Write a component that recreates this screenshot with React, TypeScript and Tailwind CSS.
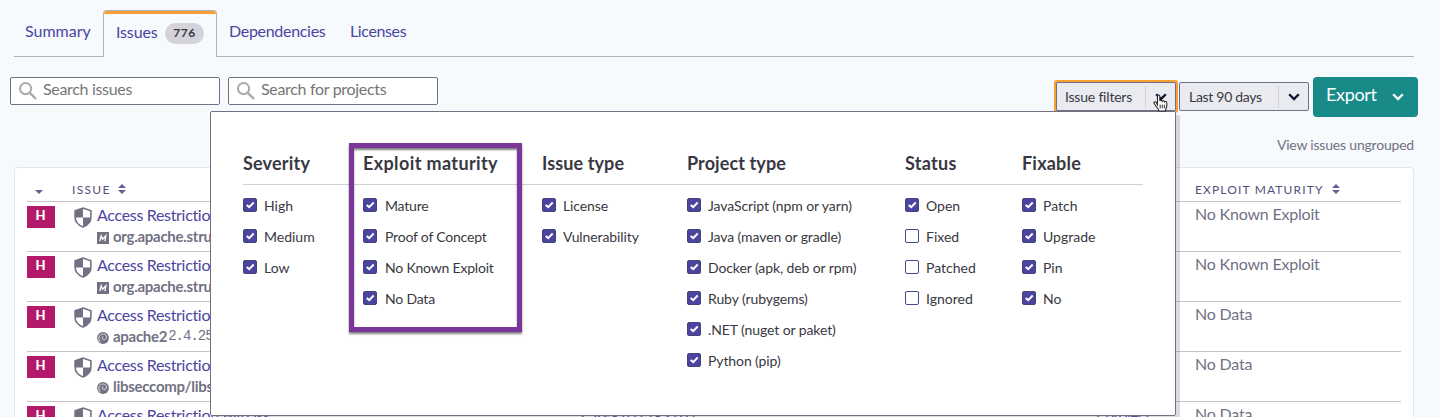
import React from "react";

type Option = { label: string; checked: boolean };
type Group = { title: string; titleClass: string; gap: string; options: Option[] };

const on = (label: string): Option => ({ label, checked: true });
const off = (label: string): Option => ({ label, checked: false });

const groups: Group[] = [
  { title: "Severity", titleClass: "tracking-[0.2px]", gap: "gap-[7px]", options: [on("High"), on("Medium"), on("Low")] },
  {
    title: "Exploit maturity",
    titleClass: "tracking-[0.38px]",
    gap: "gap-[8px] tracking-[-0.2px]",
    options: [on("Mature"), on("Proof of Concept"), on("No Known Exploit"), on("No Data")],
  },
  {
    title: "Issue type",
    titleClass: "tracking-[0.1px]",
    gap: "gap-[7px] tracking-[-0.1px]",
    options: [on("License"), on("Vulnerability")],
  },
  {
    title: "Project type",
    titleClass: "tracking-[0.1px]",
    gap: "gap-[7px] tracking-[-0.1px]",
    options: [
      on("JavaScript (npm or yarn)"),
      on("Java (maven or gradle)"),
      on("Docker (apk, deb or rpm)"),
      on("Ruby (rubygems)"),
      on(".NET (nuget or paket)"),
      on("Python (pip)"),
    ],
  },
  {
    title: "Status",
    titleClass: "tracking-[0.3px]",
    gap: "gap-[7px]",
    options: [on("Open"), off("Fixed"), off("Patched"), off("Ignored")],
  },
  {
    title: "Fixable",
    titleClass: "tracking-[0.2px]",
    gap: "gap-[7px]",
    options: [on("Patch"), on("Upgrade"), on("Pin"), on("No")],
  },
];

type Row = { kind?: "maven" | "debian"; pkg?: string; version?: string; cve?: string; projects?: string; maturity: string };
const rows: Row[] = [
  { kind: "maven", pkg: "org.apache.struts", maturity: "No Known Exploit" },
  { kind: "maven", pkg: "org.apache.struts", maturity: "No Known Exploit" },
  { kind: "debian", pkg: "apache2", version: "2.4.25", maturity: "No Data" },
  { kind: "debian", pkg: "libseccomp/libs", maturity: "No Data" },
  { cve: "CVE-2017-3167", projects: "1 project", maturity: "No Data" },
];

function Checkbox({ checked }: { checked: boolean }) {
  if (!checked) return <span className="block h-[14px] w-[14px] shrink-0 rounded-[2px] border border-[#434a87] bg-white" />;
  return (
    <svg className="h-[14px] w-[14px] shrink-0" viewBox="0 0 14 14">
      <rect x="0.5" y="0.5" width="13" height="13" rx="1.5" fill="#4b45a1" stroke="#434478" />
      <path d="M3.700 6.900 6.200 9.100 10.700 4.500" fill="none" stroke="#fff" strokeWidth="2" />
    </svg>
  );
}

function SearchBox({ text }: { text: string }) {
  return (
    <div className="flex h-[28px] w-[210px] items-center rounded-[2px] border border-[#727184] bg-white pl-[8px]">
      <svg className="h-[18px] w-[18px] shrink-0" viewBox="0 0 18 18" fill="none" stroke="#aaaaaa" strokeWidth="2">
        <circle cx="6.6" cy="6.6" r="5.6" />
        <path d="M10.8 10.8 17 17" strokeWidth="2.4" />
      </svg>
      <span className="-mt-[4px] ml-[6px] text-[16px] leading-[24px] tracking-[-0.32px] text-[#757575]">{text}</span>
    </div>
  );
}

function Chevron({ className }: { className: string }) {
  return (
    <svg className={className} viewBox="0 0 12 8" fill="none" stroke="currentColor" strokeWidth="2.3">
      <path d="M1.2 1.3 6 6.1 10.8 1.3" />
    </svg>
  );
}

function SortIcon() {
  return (
    <svg className="h-[10px] w-[8px]" viewBox="0 0 8 10" fill="#625f94">
      <path d="M0 4 4 0l4 4zM0 6h8L4 10z" />
    </svg>
  );
}

function Shield() {
  return (
    <svg className="h-[21px] w-[18px] shrink-0" viewBox="0 0 18 21">
      <path
        d="M9 1 16.900 3.800V10c0 4.700-3.200 8.200-7.900 9.900C4.300 18.200 1.100 14.700 1.100 10V3.800Z"
        fill="#fff"
        stroke="#727184"
        strokeWidth="1.6"
      />
      <path d="M9 1v9.500H1V3.800zM9 10.500h8c-.3 4.600-3.500 7.800-8 9.400z" fill="#727184" />
    </svg>
  );
}

function PackageIcon({ kind }: { kind: Row["kind"] }) {
  if (kind === "maven")
    return (
      <svg className="h-[12px] w-[12px] shrink-0" viewBox="0 0 12 12">
        <rect width="12" height="12" fill="#727184" />
        <path d="M2.800 9.200 4.200 3.800 5.600 7.200 8.800 3.800 7.900 9.200" fill="none" stroke="#fff" strokeWidth="1.300" />
      </svg>
    );
  return (
    <svg className="h-[12px] w-[12px] shrink-0" viewBox="0 0 12 12">
      <circle cx="6" cy="6" r="5.900" fill="#727184" />
      <path
        d="M3.300 10.300C1.300 7.500 1.400 4.400 3.600 2.800 6 1.200 9.400 2.200 9.500 5 9.500 7.500 6.700 8.400 5.500 7.100 4.500 6 5.300 4.700 6.500 4.900"
        fill="none"
        stroke="#e6e6ea"
        strokeWidth="0.900"
      />
    </svg>
  );
}

function FilterPanel() {
  return (
    <div className="absolute left-[210px] top-[111px] h-[305px] w-[966px] rounded-[2px] border border-[#727184] bg-white px-[32px] pt-[38px] shadow-[4px_4px_0_rgba(114,113,132,0.25)]">
      <div className="grid grid-cols-[120px_179px_145px_218px_117px_121px]">
        {groups.map((g) => (
          <div key={g.title}>
            <h3
              className={
                "h-[35px] whitespace-nowrap border-b border-[#cfcfd8] text-[18px] font-bold leading-[27px] text-[#393842] " +
                g.titleClass
              }
            >
              {g.title}
            </h3>
            <ul className="pt-[4px]">
              {g.options.map((o) => (
                <li key={o.label} className={"flex h-[31px] items-center whitespace-nowrap text-[14px] text-[#393842] " + g.gap}>
                  <Checkbox checked={o.checked} />
                  <span className="mt-[2px]">{o.label}</span>
                </li>
              ))}
            </ul>
          </div>
        ))}
      </div>
      <div className="absolute left-[138px] top-[31px] h-[189px] w-[173px] border-[5px] border-[#7a3698] shadow-[0_2px_2px_rgba(0,0,0,0.5),inset_0_2px_2px_rgba(0,0,0,0.5)]" />
    </div>
  );
}

function HandCursor() {
  return (
    <svg className="absolute left-[1153px] top-[94px] h-[18px] w-[16px]" viewBox="0 0 15 17">
      <path
        d="M4.200 10V2.200c0-1.600 2.200-1.600 2.200 0V6.600c.2-1 2-.9 2.200.3.4-.9 2-.7 2.200.5.6-.7 2.200-.4 2.200 1V11c0 2-1.200 2.700-1.300 5H5.500C5.300 14 3.600 13 2.700 11.300 2 10 1 9 .8 8.300.8 7 2.500 7 3.200 8.200z"
        fill="#fff"
        stroke="#222"
        strokeWidth="1"
      />
      <path d="M6.700 10v3.600M8.700 10v3.600M10.700 10v3.600" stroke="#222" strokeWidth="0.900" />
    </svg>
  );
}

export default function App() {
  return (
    <div className="relative h-[417px] w-[1440px] overflow-hidden bg-[#f6fafd] font-['Lato',sans-serif]">
      <nav className="flex h-[57px] pl-[14px] pr-[26px] pt-[10px] text-[16px] text-[#4b45a1]">
        <div className="flex w-[89px] items-center border-b border-[#b3b2bd] pl-[11px]">
          <span className="-mt-[4px]">Summary</span>
        </div>
        <div className="relative flex w-[114px] items-center overflow-hidden rounded-t-[4px] border-x border-t border-[#b3b2bd] pl-[12px]">
          <span className="absolute inset-x-0 top-0 h-[3px] bg-[#f8a034]" />
          <span className="-mt-[4px] w-[49px] tracking-[-0.15px]">Issues</span>
          <span className="-mt-[2px] flex h-[21px] w-[39px] items-center justify-center rounded-full bg-[#d3d3d9] text-[12px] font-bold tracking-[0.6px] text-[#393842]">
            776
          </span>
        </div>
        <div className="flex flex-1 items-center border-b border-[#b3b2bd] pl-[12px]">
          <span className="-mt-[4px] w-[121px] tracking-[-0.3px]">Dependencies</span>
          <span className="-mt-[4px] tracking-[-0.38px]">Licenses</span>
        </div>
      </nav>

      <div className="flex h-[60px] items-start pl-[10px] pr-[22px] pt-[20px]">
        <div className="flex gap-[8px]">
          <SearchBox text="Search issues" />
          <SearchBox text="Search for projects" />
        </div>
        <div className="ml-auto flex items-start text-[14px] text-[#393842]">
          <div className="mr-[3px] mt-[5px] flex h-[29px] w-[120px] items-center rounded-[1px] border border-[#727184] bg-[#e9ebf1] pl-[8px] outline-2 outline-[#f8a034]">
            <span className="-mt-px w-[80px] tracking-[-0.2px]">Issue filters</span>
            <span className="h-[22px] w-px bg-[#cfcfd8]" />
            <Chevron className="ml-[9px] h-[8px] w-[12px] text-[#0b0b33]" />
          </div>
          <div className="mr-[4px] mt-[5px] flex h-[29px] w-[130px] items-center rounded-[2px] border border-[#727184] bg-[#e9ebf1] pl-[9px]">
            <span className="-mt-px w-[89px] tracking-[-0.3px]">Last 90 days</span>
            <span className="h-[22px] w-px bg-[#cfcfd8]" />
            <Chevron className="ml-[9px] h-[8px] w-[12px] text-[#0b0b33]" />
          </div>
          <div className="flex h-[40px] w-[105px] items-center rounded-[4px] bg-[#188b89] pl-[13px] text-[18px] text-white">
            <span className="-mt-[5px] w-[66px] tracking-[-0.35px]">Export</span>
            <Chevron className="h-[8px] w-[12px]" />
          </div>
        </div>
      </div>

      <div className="flex h-[50px] justify-end pr-[26px] pt-[18px] text-[14px] leading-[20px] tracking-[-0.2px] text-[#727184]">
        View issues ungrouped
      </div>

      <main className="ml-[14px] h-[260px] w-[1400px] rounded-[4px] border border-[#e4e8ee] bg-white px-[12px]">
        <div className="flex h-[34px] items-center border-b border-[#c4c4c8] pt-[9px] text-[12px] text-[#53507c]">
          <svg className="ml-[8px] mt-[5px] h-[4px] w-[8px]" viewBox="0 0 8 4" fill="#625f94">
            <path d="M0 0h8L4 4z" />
          </svg>
          <span className="ml-[29px] mt-px w-[46px] tracking-[1.300px]">ISSUE</span>
          <SortIcon />
          <span className="ml-auto mt-px w-[137px] tracking-[1.150px]">EXPLOIT MATURITY</span>
          <span className="mr-[61px]">
            <SortIcon />
          </span>
        </div>
        {rows.map((r, i) => (
          <div key={i} className="flex h-[50px] items-start border-b border-[#c4c4c8] text-[16px]">
            <span className="mt-[4px] flex h-[22px] w-[28px] items-center justify-center bg-[#b3196b] pb-[2px] pr-px text-[13px] font-black text-white">
              H
            </span>
            <span className="ml-[19px] mt-[5px]">
              <Shield />
            </span>
            <div className="ml-[5px] w-[484px] whitespace-nowrap">
              <div className="mt-[3px] h-[20px] leading-[20px] tracking-[-0.32px] text-[#4b45a1]">Access Restriction Bypass</div>
              {r.pkg && (
                <div className="flex h-[22px] items-center text-[#727184]">
                  <span className="mt-[4px]">
                    <PackageIcon kind={r.kind} />
                  </span>
                  <span className="ml-[4px] text-[15px] font-bold leading-[20px] tracking-[-0.28px]">{r.pkg}</span>
                  {r.version && (
                    <span className="ml-[1px] mt-px font-['Liberation_Mono',monospace] text-[14px] tracking-[-1px]">{r.version}</span>
                  )}
                </div>
              )}
            </div>
            <span className="mt-[3px] w-[512px] leading-[20px] text-[#4b45a1]">{r.cve}</span>
            <span className="mt-[3px] w-[102px] leading-[20px] tracking-[-0.6px] text-[#4b45a1]">{r.projects}</span>
            <span className="mt-[2px] whitespace-nowrap leading-[20px] tracking-[-0.2px] text-[#727184]">{r.maturity}</span>
          </div>
        ))}
      </main>

      <FilterPanel />
      <HandCursor />
    </div>
  );
}
